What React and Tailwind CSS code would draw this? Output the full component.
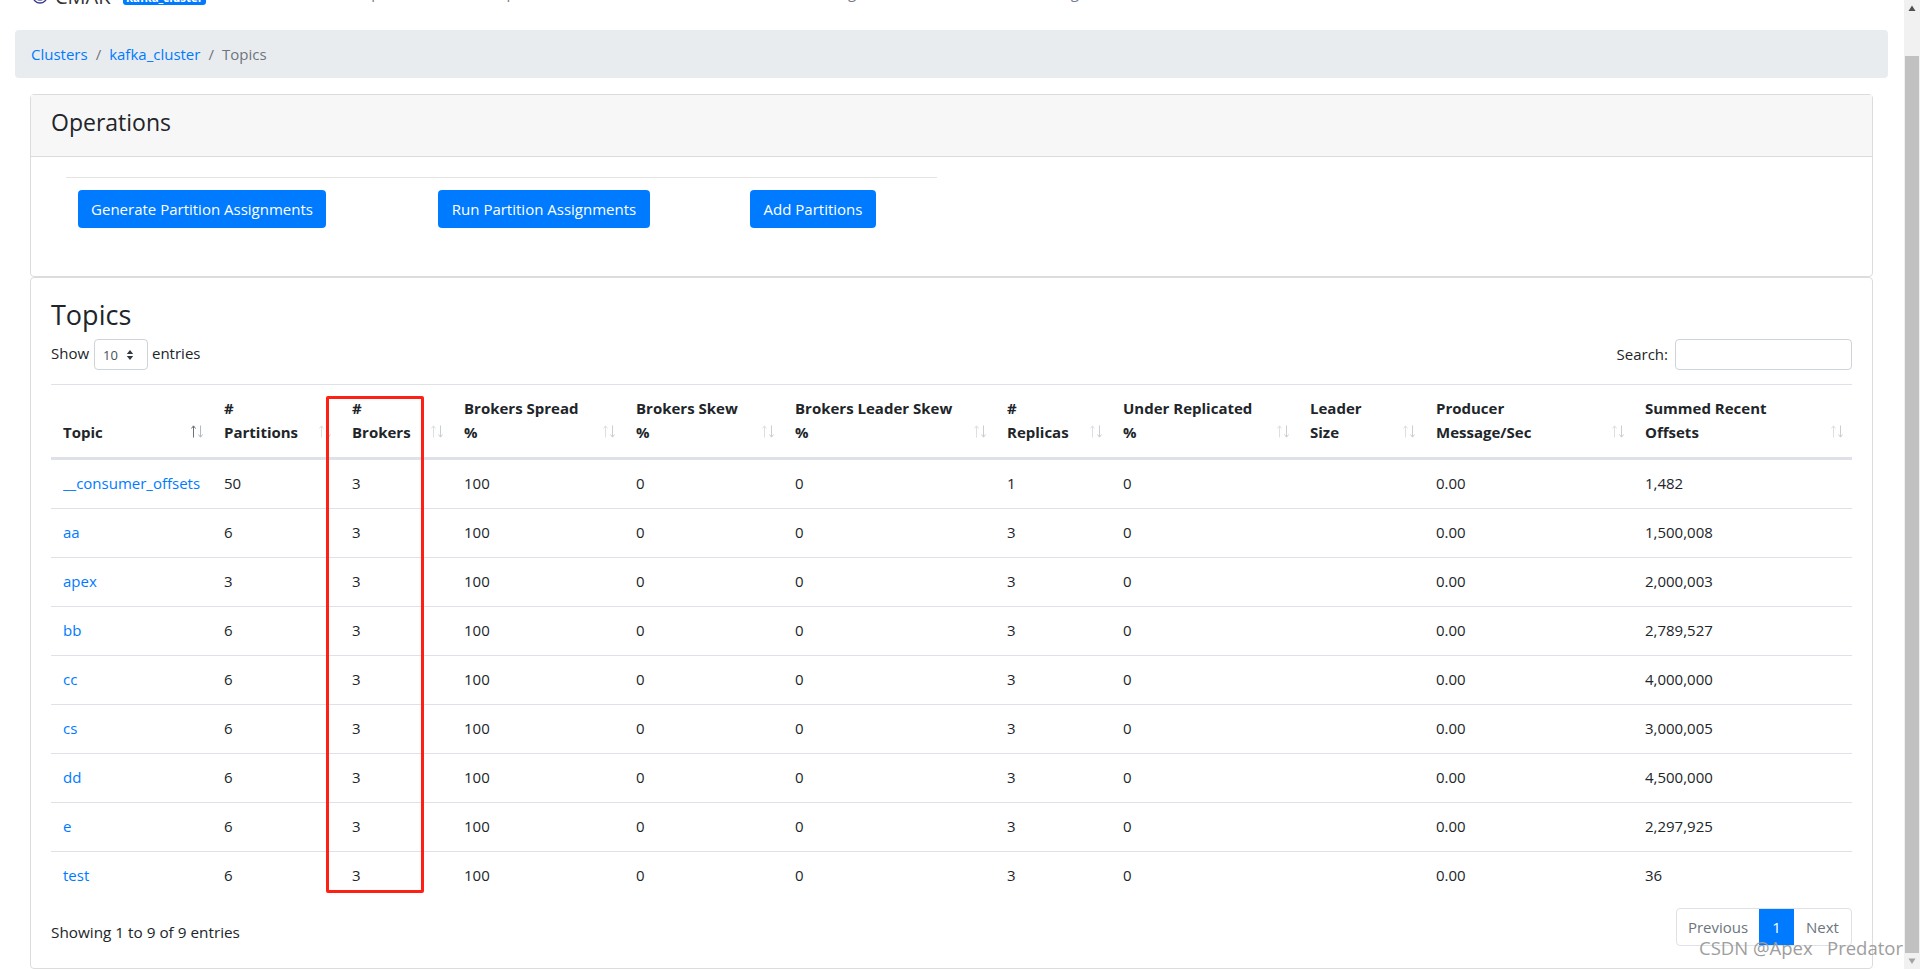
import React from "react";

const font = { fontFamily: '"Open Sans", sans-serif' };

const columns = [
  { w: "w-[161px]", a: "", b: "Topic", active: true },
  { w: "w-[128px]", a: "#", b: "Partitions" },
  { w: "w-[112px]", a: "#", b: "Brokers" },
  { w: "w-[172px]", a: "Brokers Spread", b: "%" },
  { w: "w-[159px]", a: "Brokers Skew", b: "%" },
  { w: "w-[212px]", a: "Brokers Leader Skew", b: "%" },
  { w: "w-[116px]", a: "#", b: "Replicas" },
  { w: "w-[187px]", a: "Under Replicated", b: "%" },
  { w: "w-[126px]", a: "Leader", b: "Size" },
  { w: "w-[209px]", a: "Producer", b: "Message/Sec" },
  { w: "w-[219px]", a: "Summed Recent", b: "Offsets" },
];

const rows = [
  ["__consumer_offsets", "50", "3", "100", "0", "0", "1", "0", "", "0.00", "1,482"],
  ["aa", "6", "3", "100", "0", "0", "3", "0", "", "0.00", "1,500,008"],
  ["apex", "3", "3", "100", "0", "0", "3", "0", "", "0.00", "2,000,003"],
  ["bb", "6", "3", "100", "0", "0", "3", "0", "", "0.00", "2,789,527"],
  ["cc", "6", "3", "100", "0", "0", "3", "0", "", "0.00", "4,000,000"],
  ["cs", "6", "3", "100", "0", "0", "3", "0", "", "0.00", "3,000,005"],
  ["dd", "6", "3", "100", "0", "0", "3", "0", "", "0.00", "4,500,000"],
  ["e", "6", "3", "100", "0", "0", "3", "0", "", "0.00", "2,297,925"],
  ["test", "6", "3", "100", "0", "0", "3", "0", "", "0.00", "36"],
];

function SortIcon({ active }) {
  return (
    <svg width="14" height="13" viewBox="0 0 14 13" className="absolute right-[8px] bottom-[19px]" fill="none" strokeWidth="1">
      <path d="M3.5 12.5V1M1.5 3.5L3.5 .8L5.5 3.5" stroke={active ? "#6b7278" : "#dcdfe3"} />
      <path d="M10.5 .5V12M8.5 9.5L10.5 12.2L12.5 9.5" stroke={active ? "#b4b9be" : "#c9ced3"} />
    </svg>
  );
}

function Btn({ children, w }) {
  return (
    <button className={`h-[38px] rounded bg-[#007bff] text-[15px] text-white ${w}`}>{children}</button>
  );
}

export default function App() {
  return (
    <div style={font} className="flex h-[969px] w-[1920px] overflow-hidden bg-white text-[15px] leading-[24px] text-[#212529]">
      <div className="relative min-w-0 flex-1">
        {/* navbar, scrolled almost out of view */}
        <div className="flex h-[30px] items-end">
          <div className="mb-[25px] ml-[32px] flex h-[24px] w-[204px] shrink-0 items-end">
            <svg width="16" height="18" viewBox="0 0 16 18" fill="none" className="shrink-0">
              <circle cx="8" cy="9" r="7" stroke="#3b3a8c" strokeWidth="1.4" />
              <circle cx="8" cy="10" r="4" fill="#7b7bc0" />
            </svg>
            <span className="mb-[-4px] ml-[7px] w-[68px] shrink-0 text-[20px] leading-[24px] text-[#333]">CMAK</span>
            <span className="h-[18px] w-[83px] shrink-0 rounded-[3px] bg-[#007bff] pt-[5px] text-center text-[11.5px] font-bold leading-[12px] text-white">kafka_cluster</span>
          </div>
          <div className="mb-[26px] flex h-[24px] whitespace-nowrap text-[#7a7a8c]">
            <span className="ml-[-6px] w-[62px] shrink-0">Cluster</span>
            <span className="w-[62px] shrink-0">Brokers</span>
            <span className="w-[64px] shrink-0">Topic</span>
            <span className="w-[204px] shrink-0">Preferred Replica Election</span>
            <span className="w-[182px] shrink-0">Schedule Leader Election</span>
            <span className="w-[159px] shrink-0">Reassign Partitions</span>
            <span className="w-[91px] shrink-0">Consumers</span>
            <span className="shrink-0">Logkafka</span>
          </div>
        </div>

        {/* breadcrumb */}
        <nav className="ml-[15px] mr-[16px] flex h-[48px] items-center gap-[8px] rounded bg-[#e9ecef] px-[16px]">
          <a className="text-[#007bff]">Clusters</a>
          <span className="text-[#6c757d]">/</span>
          <a className="text-[#007bff]">kafka_cluster</a>
          <span className="text-[#6c757d]">/</span>
          <span className="text-[#6c757d]">Topics</span>
        </nav>

        <div className="ml-[30px] mr-[31px] mt-[16px]">
          {/* Operations */}
          <section className="h-[183px] rounded border border-[#dcdcdc]">
            <div className="flex h-[62px] items-center border-b border-[#dcdcdc] bg-[#f7f7f7] px-[20px] pb-[8px] text-[23px] font-medium leading-[28px]">
              Operations
            </div>
            <div className="px-[35px] pt-[20px]">
              <div className="w-[871px] border-t border-[#e3e3e3]" />
              <div className="mt-[12px] flex pl-[12px]">
                <Btn w="w-[248px]">Generate Partition Assignments</Btn>
                <div className="ml-[112px]"><Btn w="w-[212px]">Run Partition Assignments</Btn></div>
                <div className="ml-[100px]"><Btn w="w-[126px]">Add Partitions</Btn></div>
              </div>
            </div>
          </section>

          {/* Topics */}
          <section className="h-[692px] rounded border border-[#dcdcdc] px-[20px] pt-[20px]">
            <h2 className="text-[27px] font-medium leading-[34px]">Topics</h2>
            <div className="mt-[7px] flex h-[31px] w-[1801px] items-center justify-between">
              <div className="flex items-center">
                <span className="w-[38px] pb-[3px]">Show</span>
                <span className="ml-[5px] flex h-[31px] w-[54px] items-center gap-[8px] rounded border border-[#ced4da] pl-[8px] text-[13px] text-[#495057]">
                  10
                  <svg width="8" height="12" viewBox="0 0 8 12" fill="#343a40"><path d="M4 1L7.2 5H.8zM4 11L.8 7h6.4z" /></svg>
                </span>
                <span className="ml-[4px] pb-[3px]">entries</span>
              </div>
              <div className="flex items-center">
                <span className="pb-[1px]">Search:</span>
                <span className="ml-[7px] h-[31px] w-[177px] rounded border border-[#ced4da]" />
              </div>
            </div>

            <table className="mt-[14px] w-[1801px] table-fixed border-separate border-spacing-0">
              <thead>
                <tr>
                  {columns.map((c, i) => (
                    <th key={i} className={`${c.w} relative h-[76px] border-t border-b-[3px] border-[#dee2e6] px-[12px] pt-[11px] pb-[13px] text-left align-bottom font-bold`}>
                      {c.a && <div>{c.a}</div>}
                      <div>{c.b}</div>
                      <SortIcon active={c.active} />
                    </th>
                  ))}
                </tr>
              </thead>
              <tbody>
                {rows.map((r, i) => (
                  <tr key={i}>
                    {r.map((v, j) => (
                      <td key={j} className={`h-[48px] px-[12px] pt-[11px] pb-[13px] ${i < rows.length - 1 ? "border-b border-[#dee2e6]" : ""} ${j === 0 ? "text-[#007bff]" : ""}`}>{v}</td>
                    ))}
                  </tr>
                ))}
              </tbody>
            </table>

            <div className="mt-[8px] flex w-[1801px] items-start justify-between">
              <div className="pt-[12px] text-[15.3px]">Showing 1 to 9 of 9 entries</div>
              <div className="flex h-[38px] overflow-hidden rounded border border-[#dee2e6] text-[#6c757d]">
                <span className="flex w-[82px] items-center justify-center pb-[1px]">Previous</span>
                <span className="-my-px flex w-[35px] items-center justify-center bg-[#007bff] text-white">1</span>
                <span className="flex w-[57px] items-center justify-center pb-[1px]">Next</span>
              </div>
            </div>
          </section>
        </div>

        {/* red annotation */}
        <div className="absolute left-[326px] top-[396px] h-[497px] w-[98px] rounded-[2px] border-[3px] border-[#ff2015]" />
        {/* watermark */}
        <div className="absolute left-[1699px] top-[936px] whitespace-pre text-[18.5px] leading-[24px] text-[#9e9e9e]">CSDN @Apex   Predator</div>
      </div>

      {/* scrollbar */}
      <div className="flex w-[16px] shrink-0 flex-col bg-[#f1f1f1]">
        <svg width="16" height="16" viewBox="0 0 16 16" className="shrink-0"><path d="M8 5.5L11.5 11H4.5z" fill="#505050" /></svg>
        <div className="ml-[1px] mt-[40px] w-[14px] flex-1 bg-[#c1c1c1]" />
        <svg width="16" height="16" viewBox="0 0 16 16" className="shrink-0"><path d="M8 11L4.5 5.5h7z" fill="#a3a3a3" /></svg>
      </div>
    </div>
  );
}
